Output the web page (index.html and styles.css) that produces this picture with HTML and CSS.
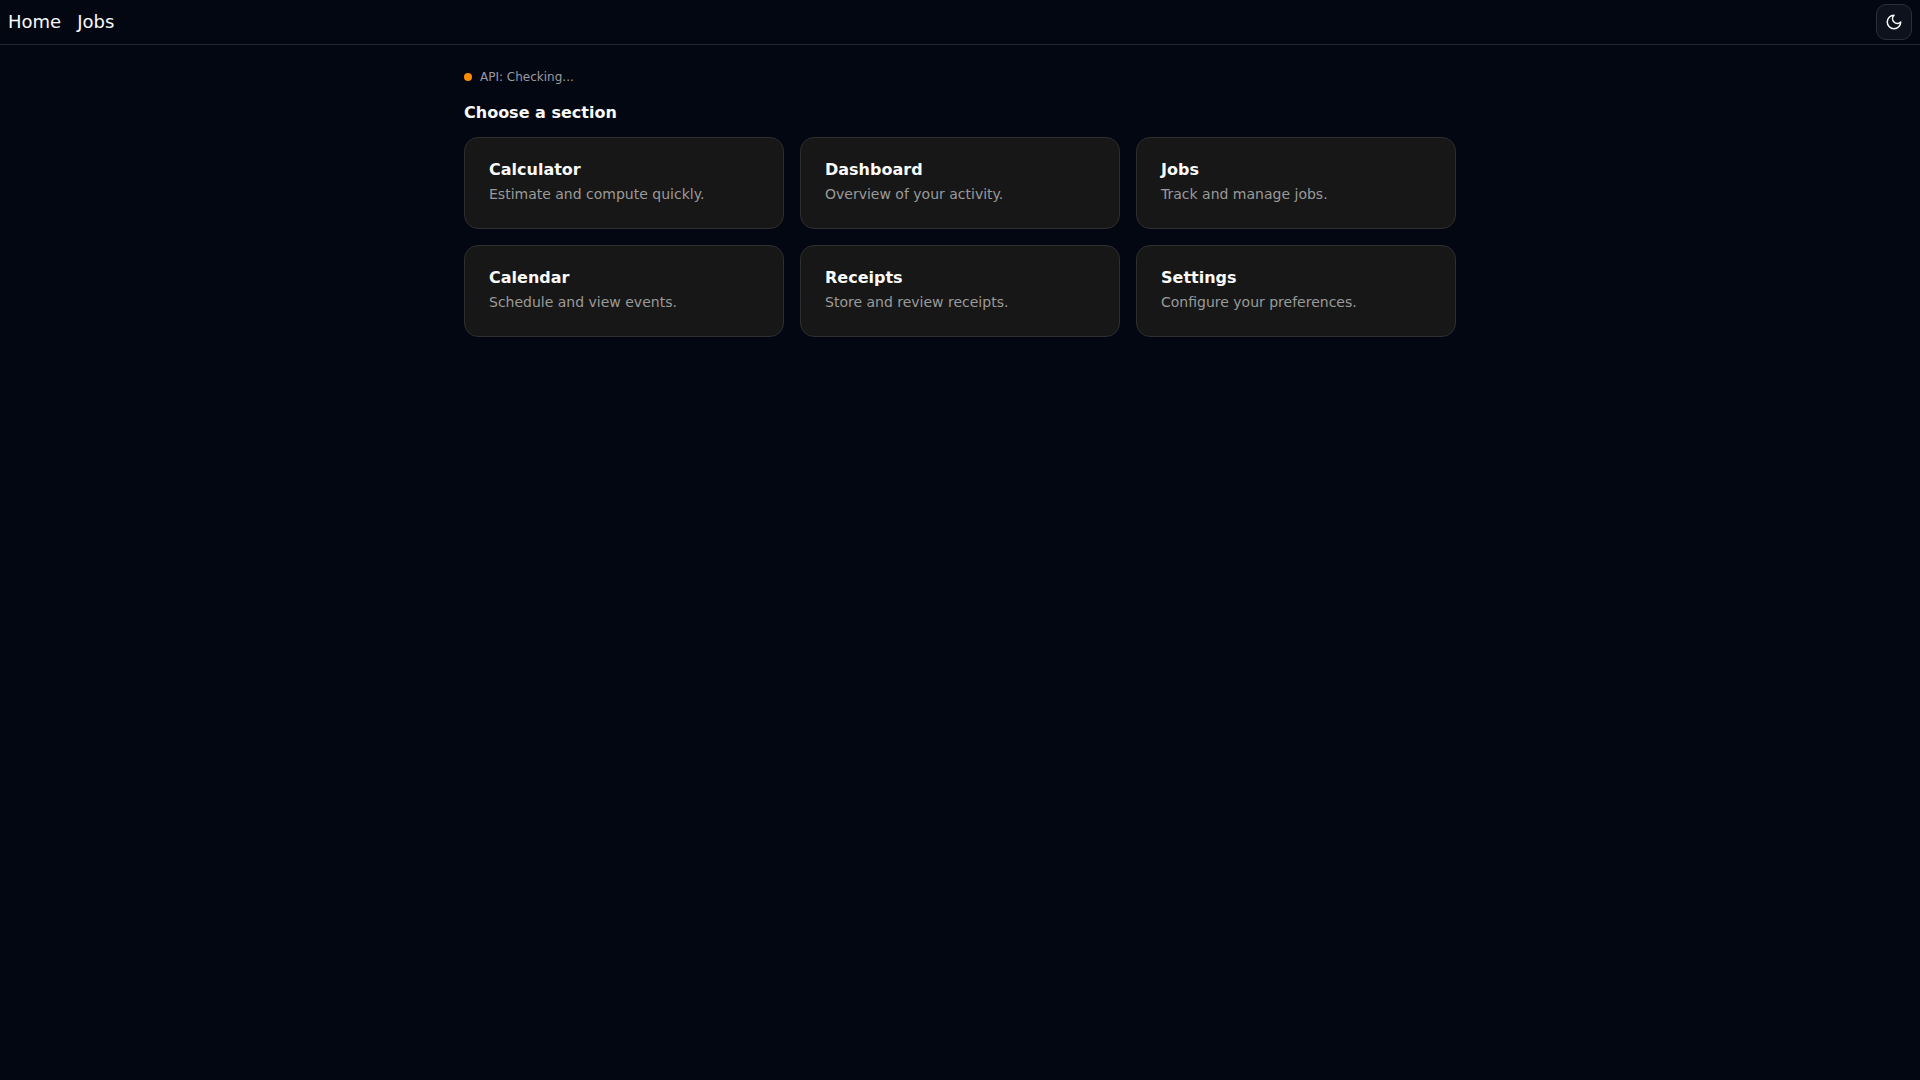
FILE: index.html
```html
<!DOCTYPE html>
<html lang="en">
<head>
<meta charset="utf-8">
<title>Home</title>
<link rel="stylesheet" href="styles.css">
</head>
<body>
<header class="topbar">
  <nav class="nav">
    <a class="nav-link" href="#">Home</a>
    <a class="nav-link" href="#">Jobs</a>
  </nav>
  <button class="theme-btn" type="button" aria-label="Toggle theme">
    <svg class="theme-icon" viewBox="0 0 24 24" width="18" height="18" fill="none" stroke="currentColor" stroke-width="2" stroke-linecap="round" stroke-linejoin="round"><path d="M12 3a6 6 0 0 0 9 9 9 9 0 1 1-9-9Z"/></svg>
  </button>
</header>
<main class="container">
  <div class="status"><span class="dot"></span><span>API: Checking...</span></div>
  <h1 class="heading">Choose a section</h1>
  <div class="grid">
    <a class="card" href="#"><span class="card-title">Calculator</span><span class="card-desc">Estimate and compute quickly.</span></a>
    <a class="card" href="#"><span class="card-title">Dashboard</span><span class="card-desc">Overview of your activity.</span></a>
    <a class="card" href="#"><span class="card-title">Jobs</span><span class="card-desc">Track and manage jobs.</span></a>
    <a class="card" href="#"><span class="card-title">Calendar</span><span class="card-desc">Schedule and view events.</span></a>
    <a class="card" href="#"><span class="card-title">Receipts</span><span class="card-desc">Store and review receipts.</span></a>
    <a class="card" href="#"><span class="card-title">Settings</span><span class="card-desc">Configure your preferences.</span></a>
  </div>
</main>
</body>
</html>
```
FILE: styles.css
```css
* { box-sizing: border-box; }
html, body { margin: 0; min-height: 100%; }
body {
  min-height: 100vh;
  background: #030712;
  color: #fafafa;
  font-family: "DejaVu Sans", sans-serif;
}
.topbar {
  display: flex;
  align-items: center;
  justify-content: space-between;
  height: 45px;
  padding: 0 8px;
  border-bottom: 1px solid #26262e;
}
.nav { display: flex; gap: 16px; }
.nav-link {
  color: #fafafa;
  font-size: 18px;
  line-height: 28px;
  text-decoration: none;
}
.theme-btn {
  display: flex;
  align-items: center;
  justify-content: center;
  width: 36px;
  height: 36px;
  padding: 0;
  background: #0e121c;
  border: 1px solid #2d2f38;
  border-radius: 10px;
  color: #fafafa;
}
.container {
  width: 992px;
  margin: 0 auto;
  padding-top: 24px;
}
.status {
  display: flex;
  align-items: center;
  gap: 8px;
  height: 16px;
  color: #9a9aa2;
  font-size: 12px;
}
.dot {
  width: 8px;
  height: 8px;
  border-radius: 50%;
  background: #ff8c00;
}
.heading {
  margin: 16px 0 12px;
  font-size: 16px;
  line-height: 24px;
  font-weight: 700;
}
.grid {
  display: grid;
  grid-template-columns: repeat(3, 1fr);
  gap: 16px;
}
.card {
  display: flex;
  flex-direction: column;
  gap: 2px;
  height: 92px;
  padding: 20px 24px;
  background: #171717;
  border: 1px solid #2e2e2e;
  border-radius: 14px;
  color: #fafafa;
  text-decoration: none;
}
.card-title { font-size: 16px; line-height: 24px; font-weight: 700; }
.card-desc { font-size: 14px; line-height: 20px; color: #9a9a9a; }
```
